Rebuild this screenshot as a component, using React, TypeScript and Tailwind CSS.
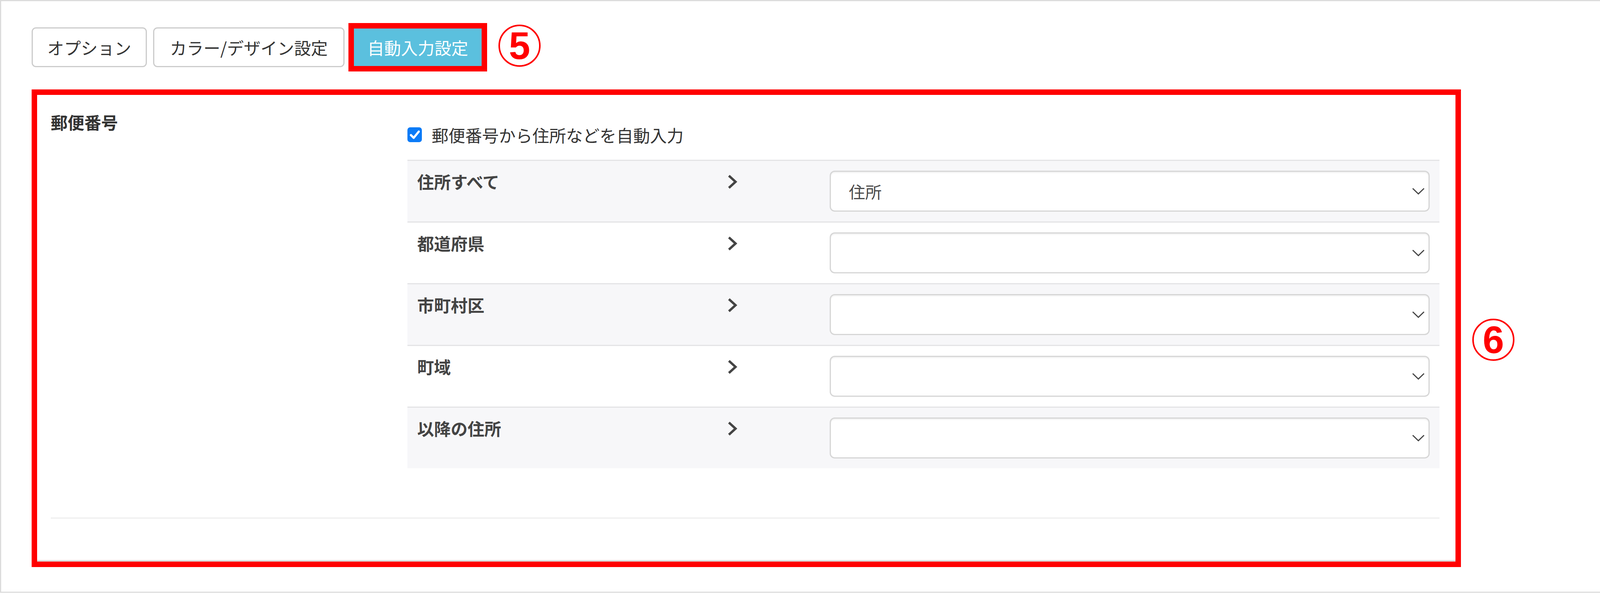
import React from "react";

const rows = [
  { label: "住所すべて", value: "住所" },
  { label: "都道府県", value: "" },
  { label: "市町村区", value: "" },
  { label: "町域", value: "" },
  { label: "以降の住所", value: "" },
];

function Circled({ n, className }: { n: string; className?: string }) {
  return (
    <div
      className={
        "w-[108px] h-[108px] shrink-0 rounded-full border-[4px] border-[#ff0000] flex items-center justify-center " +
        (className ?? "")
      }
    >
      <span className="font-['Liberation_Sans',Arial,sans-serif] font-bold text-[98px] leading-none text-[#ff0000]">
        {n}
      </span>
    </div>
  );
}

function ChevronRight() {
  return (
    <svg width="26" height="37" viewBox="0 0 26 37" fill="none">
      <polyline
        points="4,3 21,18.5 4,34"
        stroke="#444"
        strokeWidth="6"
        strokeLinejoin="miter"
        fill="none"
      />
    </svg>
  );
}

function ChevronDown() {
  return (
    <svg width="32" height="18" viewBox="0 0 32 18" fill="none">
      <polyline
        points="1.5,1.5 16,15.5 30.5,1.5"
        stroke="#444"
        strokeWidth="3"
        fill="none"
      />
    </svg>
  );
}

export default function App() {
  return (
    <div className="w-[4202px] h-[1521px] bg-white font-['Noto_Sans_CJK_JP','Noto_Sans',sans-serif]">
      <div className="w-[4200px] h-[1518px] border-[3px] border-[#dcdcdc] pt-[56px] pl-[78px]">
        {/* Tabs */}
        <div className="flex items-center h-[124px]">
          <button className="w-[295px] h-[102px] border-[3px] border-[#cccccc] rounded-[11px] bg-white text-[43px] leading-[1.5] text-[#333] flex items-center justify-center">
            オプション
          </button>
          <button className="ml-[16px] w-[490px] h-[102px] border-[3px] border-[#cccccc] rounded-[11px] bg-white text-[43px] leading-[1.5] text-[#333] flex items-center justify-center">
            カラー/デザイン設定
          </button>
          <div className="ml-[10px] border-[14px] border-[#ff0000]">
            <div className="w-[327px] h-[96px] bg-[#5bc0de] text-white text-[43px] leading-[1.5] flex items-center justify-center">
              自動入力設定
            </div>
          </div>
          <Circled n="5" className="ml-[29px] mb-[8px]" />
        </div>

        {/* Panel with annotation */}
        <div className="flex items-start mt-[46px]">
          <div className="w-[3659px] h-[1223px] border-[14px] border-[#ff0000] flex flex-col">
            <div className="flex pt-[37px] pl-[35px] pr-[41px]">
              <div className="w-[913px] shrink-0 text-[43px] font-bold leading-[1.5] text-[#333]">
                郵便番号
              </div>
              <div className="flex-1 pt-[33px]">
                <div className="flex items-center h-[64px]">
                  <div className="w-[37px] h-[38px] rounded-[7px] bg-[#0b7bf7] flex items-center justify-center">
                    <svg width="37" height="38" viewBox="0 0 37 38" fill="none">
                      <polyline
                        points="9,20 16,27 29,11"
                        stroke="white"
                        strokeWidth="5.5"
                        strokeLinecap="round"
                        strokeLinejoin="round"
                        fill="none"
                      />
                    </svg>
                  </div>
                  <span className="ml-[25px] text-[43px] leading-[1.5] text-[#333]">
                    郵便番号から住所などを自動入力
                  </span>
                </div>
                <div className="mt-[32px]">
                  {rows.map((r, i) => (
                    <div
                      key={r.label}
                      className={
                        "flex border-t-[3px] border-[#e4e4e6] " +
                        (i % 2 === 0 ? "bg-[#f7f7f9]" : "bg-white")
                      }
                    >
                      <div className="w-[819px] shrink-0 pl-[25px] pt-[20px] text-[43px] font-bold leading-[1.5] text-[#444]">
                        {r.label}
                      </div>
                      <div className="w-[262px] shrink-0 pt-[35px]">
                        <ChevronRight />
                      </div>
                      <div className="flex-1 pt-[25px] pb-[25px] pr-[25px]">
                        <div className="h-[105px] rounded-[13px] border-[3px] border-[#d6d6d6] bg-white shadow-[inset_0_3px_3px_rgba(0,0,0,0.05)] flex items-center justify-between pl-[46px] pr-[10px]">
                          <span className="text-[42px] leading-[1.5] text-[#4a4a4a]">
                            {r.value}
                          </span>
                          <ChevronDown />
                        </div>
                      </div>
                    </div>
                  ))}
                </div>
              </div>
            </div>
            <div className="ml-[35px] mr-[41px] mt-[126px] h-[3px] bg-[#eeeeee]" />
            <div className="mt-auto h-[4px] bg-[#dcdcdc]" />
          </div>
          <Circled n="6" className="ml-[29px] mt-[587px]" />
        </div>
      </div>
    </div>
  );
}
